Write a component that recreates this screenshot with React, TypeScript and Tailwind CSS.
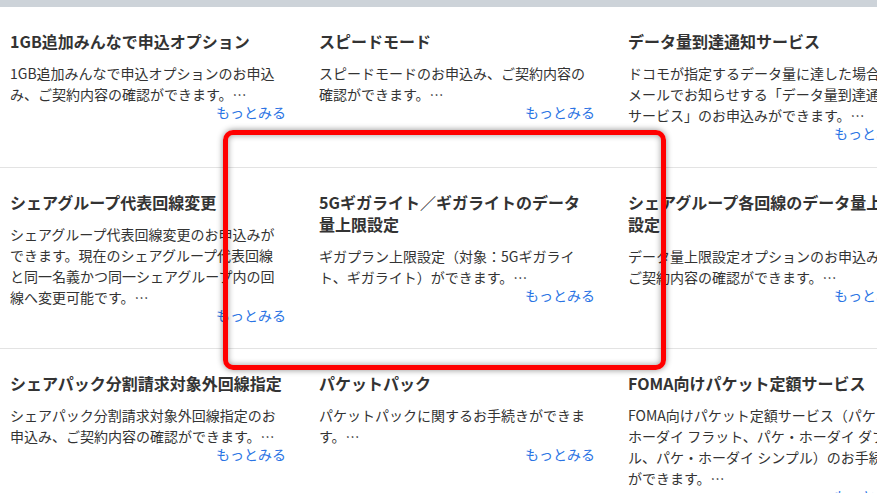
import React from "react";

type Item = { title: string; body: string; lines?: string[] };

const rows: Item[][] = [
  [
    { title: "1GB追加みんなで申込オプション", body: "1GB追加みんなで申込オプションのお申込み、ご契約内容の確認ができます。…" },
    { title: "スピードモード", body: "スピードモードのお申込み、ご契約内容の確認ができます。…" },
    {
      title: "データ量到達通知サービス",
      body: "",
      lines: [
        "ドコモが指定するデータ量に達した場合に、",
        "メールでお知らせする「データ量到達通知",
        "サービス」のお申込みができます。…",
      ],
    },
  ],
  [
    { title: "シェアグループ代表回線変更", body: "シェアグループ代表回線変更のお申込みができます。現在のシェアグループ代表回線と同一名義かつ同一シェアグループ内の回線へ変更可能です。…" },
    { title: "5Gギガライト／ギガライトのデータ量上限設定", body: "ギガプラン上限設定（対象：5Gギガライト、ギガライト）ができます。…" },
    { title: "シェアグループ各回線のデータ量上限設定", body: "データ量上限設定オプションのお申込み、ご契約内容の確認ができます。…" },
  ],
  [
    { title: "シェアパック分割請求対象外回線指定", body: "シェアパック分割請求対象外回線指定のお申込み、ご契約内容の確認ができます。…" },
    { title: "パケットパック", body: "パケットパックに関するお手続きができます。…" },
    {
      title: "FOMA向けパケット定額サービス",
      body: "",
      lines: [
        "FOMA向けパケット定額サービス（パケ・",
        "ホーダイ フラット、パケ・ホーダイ ダブ",
        "ル、パケ・ホーダイ シンプル）のお手続き",
        "ができます。…",
      ],
    },
  ],
];

const rowPad = ["pt-[23px] pb-[26px]", "pt-[23px] pb-[25px]", "pt-[23px] pb-[25px]"];

function Card({ item }: { item: Item }) {
  return (
    <div className="w-[276px] shrink-0">
      <h3 className="text-[16px] leading-[22px] font-bold text-[#333333]">{item.title}</h3>
      {item.lines ? (
        <p className="mt-[11px] text-[14px] leading-[21px] text-[#333333] whitespace-nowrap">
          {item.lines.map((l, k) => (
            <React.Fragment key={k}>
              {l}
              {k < item.lines!.length - 1 && <br />}
            </React.Fragment>
          ))}
        </p>
      ) : (
        <p className="mt-[11px] text-[14px] leading-[21px] text-[#333333]">{item.body}</p>
      )}
      <div className="text-right text-[14px] leading-[15px] text-[#2b74e4]">もっとみる</div>
    </div>
  );
}

export default function App() {
  return (
    <div
      className="relative w-[877px] h-[493px] overflow-hidden bg-white"
      style={{ fontFamily: '"Noto Sans CJK JP", "Noto Sans", sans-serif' }}
    >
      <div className="h-[7px] bg-[#cdd3d9]" />
      {rows.map((row, i) => (
        <div key={i} className={`flex gap-[33px] pl-[10px] border-b border-[#e3e3e3] ${rowPad[i]}`}>
          {row.map((item, j) => (
            <Card key={j} item={item} />
          ))}
        </div>
      ))}
      <div className="absolute left-[223px] top-[130px] w-[443px] h-[240px] border-[5px] border-[#ff0000] rounded-[10px] shadow-[0_0_6px_rgba(0,0,0,0.45),inset_0_0_6px_rgba(0,0,0,0.4)]" />
    </div>
  );
}
